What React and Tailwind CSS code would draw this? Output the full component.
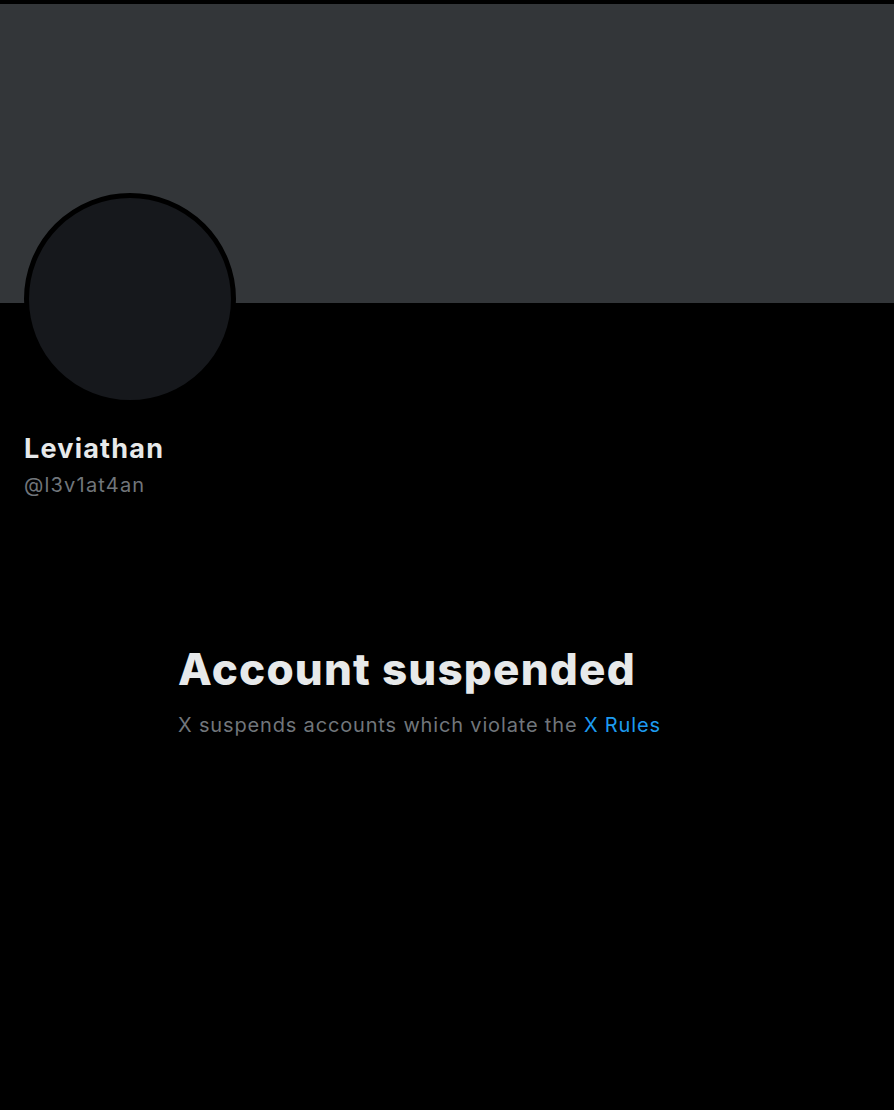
const App = () => {
  return (
    <div className="min-h-[1110px] bg-black pt-1 font-['Inter',sans-serif]">
      {/* banner */}
      <div className="h-[299px] bg-[#333639]" />

      {/* avatar + names */}
      <div className="px-6">
        <div className="-mt-[110px] size-[212px] rounded-full border-[5px] border-black bg-[#16181c]" />
        <div className="mt-[28px] text-[27px] leading-[32px] font-bold tracking-[0.045em] text-[#e7e9ea]">
          Leviathan
        </div>
        <div className="mt-2 text-[20px] leading-6 tracking-[0.06em] text-[#71767b]">
          @l3v1at4an
        </div>
      </div>

      {/* suspended notice */}
      <div className="mt-[146px] pl-[178px]">
        <h1 className="text-[44px] leading-[52px] font-extrabold tracking-[0.027em] text-[#e7e9ea]">
          Account suspended
        </h1>
        <p className="mt-[18px] text-[20px] leading-6 tracking-[0.042em] text-[#71767b]">
          X suspends accounts which violate the{" "}
          <a href="#" className="text-[#1d9bf0]">
            X Rules
          </a>
        </p>
      </div>
    </div>
  );
};

export default App;
